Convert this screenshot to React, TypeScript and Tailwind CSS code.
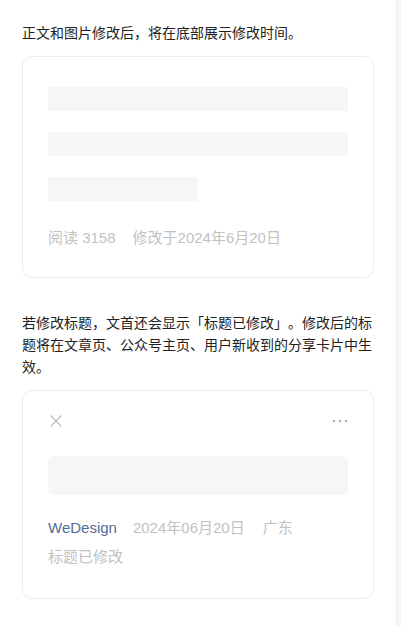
import React from "react";

const font = { fontFamily: '"Liberation Sans", "Noto Sans CJK SC", sans-serif' };

function CloseIcon() {
  return (
    <svg width="14" height="14" viewBox="0 0 14 14" fill="none">
      <path d="M1.5 1.5 L12.5 12.5 M12.5 1.5 L1.5 12.5" stroke="#bcbcbc" strokeWidth="1.2" />
    </svg>
  );
}

function MoreIcon() {
  return (
    <svg width="16" height="4" viewBox="0 0 16 4" fill="#b8b8b8">
      <circle cx="2" cy="2" r="1.3" />
      <circle cx="8" cy="2" r="1.3" />
      <circle cx="14" cy="2" r="1.3" />
    </svg>
  );
}

export default function App() {
  return (
    <div className="flex min-h-[626px] bg-white [text-spacing-trim:space-all]" style={font}>
      <div className="w-[396px] px-[22px] pt-[22px] pb-6">
        <p className="text-[14px] leading-[22px] text-[#222]">
          正文和图片修改后，将在底部展示修改时间。
        </p>

        <div className="mt-3 rounded-[10px] border border-[#ececec] px-[25px] pt-[30px] pb-[28px]">
          <div className="flex flex-col gap-[21px]">
            <div className="h-6 w-full bg-[#f5f6f8]" />
            <div className="h-6 w-full bg-[#f5f6f8]" />
            <div className="h-6 w-[150px] bg-[#f5f6f8]" />
          </div>
          <div className="mt-[26px] flex text-[15px] leading-[22px] text-[#c2c2c2]">
            <span>阅读 3158</span>
            <span className="ml-[17px]">修改于2024年6月20日</span>
          </div>
        </div>

        <p className="mt-[34px] text-[14px] leading-[22px] text-[#222]">
          若修改标题，文首还会显示「标题已修改」。修改后的标题将在文章页、公众号主页、用户新收到的分享卡片中生效。
        </p>

        <div className="mt-[12px] rounded-[10px] border border-[#ececec] px-[25px] pt-[18px] pb-[30px]">
          <div className="flex h-6 items-center justify-between">
            <span className="ml-[1px]">
              <CloseIcon />
            </span>
            <MoreIcon />
          </div>
          <div className="mt-[23px] h-[39px] w-full rounded-[6px] bg-[#f5f6f8]" />
          <div className="mt-[22px] flex text-[15px] leading-[22px]">
            <span className="text-[#576b95]">WeDesign</span>
            <span className="ml-4 text-[#c2c2c2]">2024年06月20日</span>
            <span className="ml-[18px] text-[#c2c2c2]">广东</span>
          </div>
          <div className="mt-[7px] text-[15px] leading-[22px] text-[#c2c2c2]">标题已修改</div>
        </div>
      </div>
      <div className="flex-1 border-l border-[#ececec] bg-[#f7f7f7]" />
    </div>
  );
}
